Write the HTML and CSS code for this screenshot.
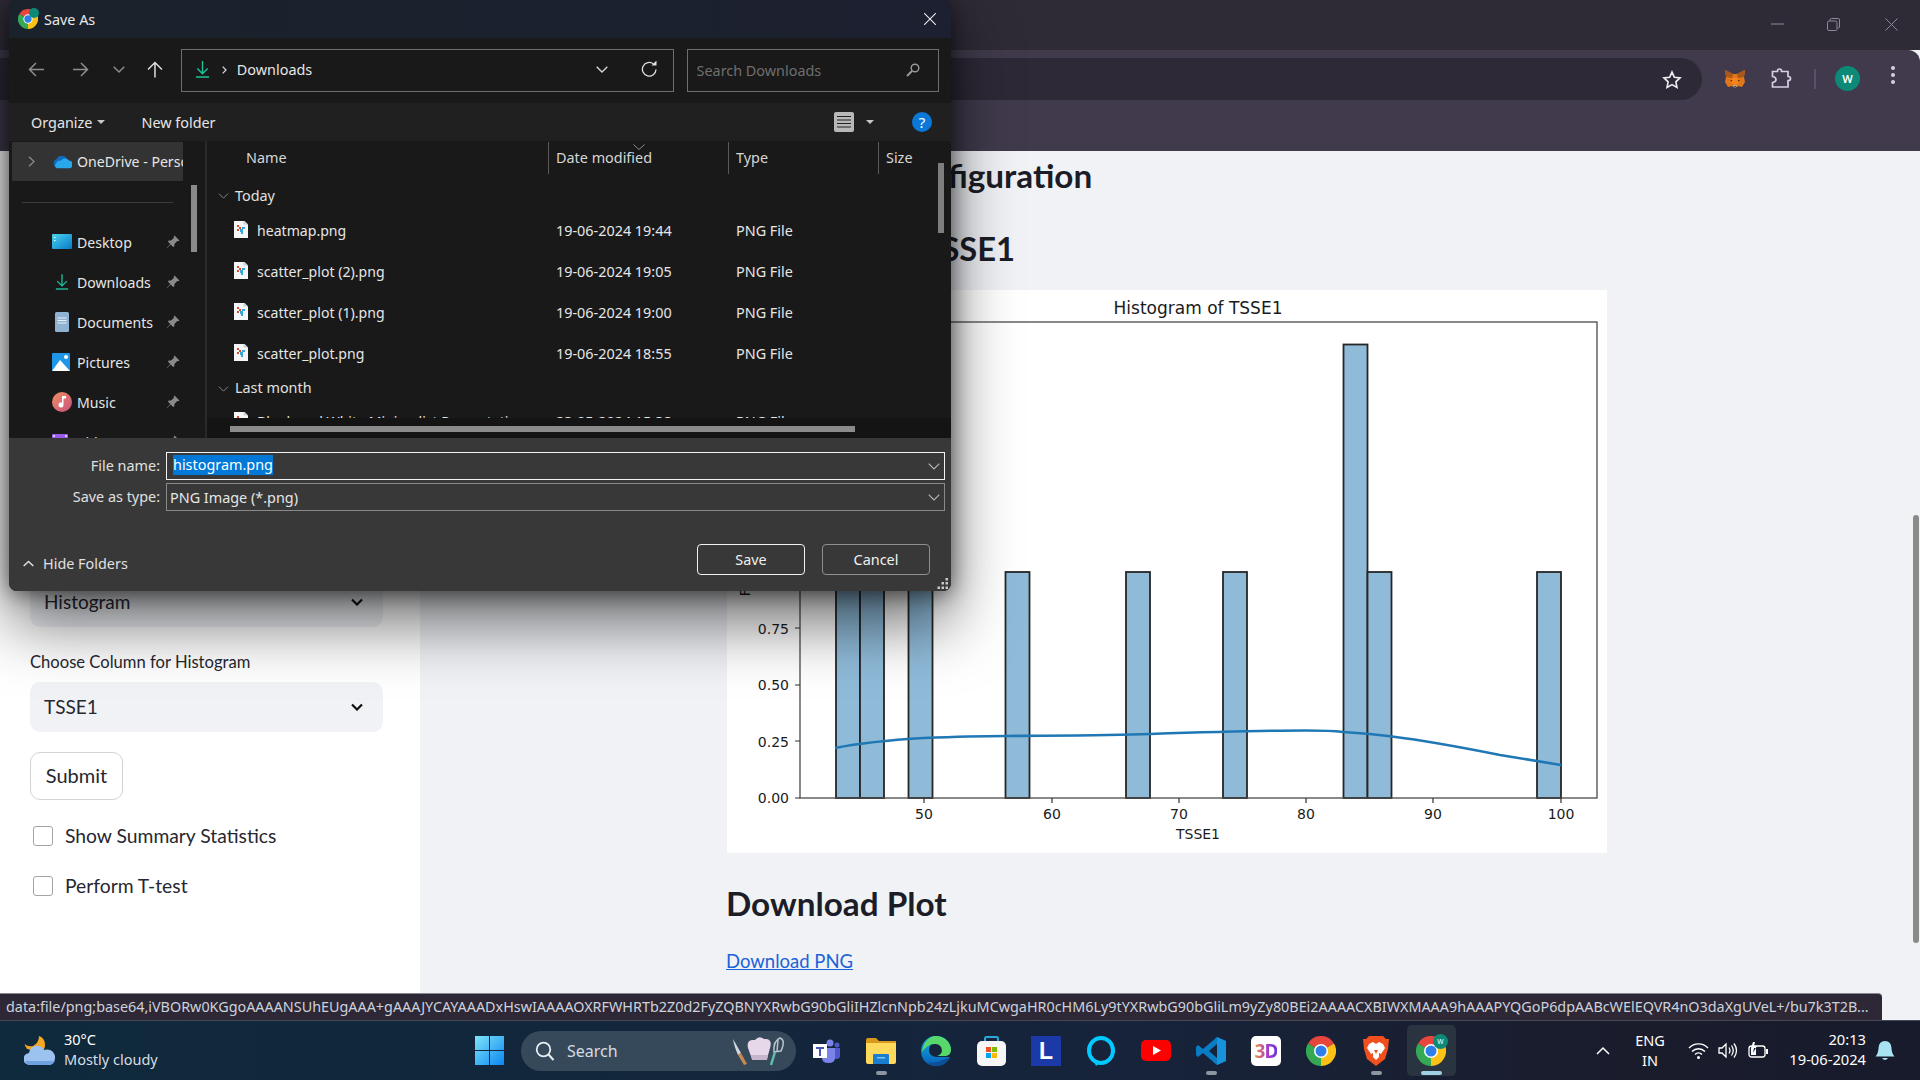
FILE: index.html
```html
<!DOCTYPE html>
<html lang="en">
<head>
<meta charset="utf-8">
<title>Save As</title>
<link rel="stylesheet" href="styles.css">
</head>
<body>
<svg class="defs" width="0" height="0" aria-hidden="true">
  <symbol id="chrome" viewBox="0 0 24 24">
    <path fill="#e8453c" d="M12 12 1.600 6A12 12 0 0 1 22.400 6Z"/>
    <path fill="#34a853" d="M12 12 1.600 6A12 12 0 0 0 12 24Z"/>
    <path fill="#fbc116" d="M12 12 22.400 6A12 12 0 0 1 12 24Z"/>
    <circle cx="12" cy="12" r="5.600" fill="#fff"/>
    <circle cx="12" cy="12" r="4.400" fill="#2f7fea"/>
  </symbol>
  <symbol id="dl" viewBox="0 0 16 18">
    <path fill="none" stroke="#1fc19b" stroke-width="1.500" d="M8 0v13M2.500 8 8 13.500 13.500 8"/>
    <path fill="none" stroke="#1fc19b" stroke-width="1.600" d="M1 17h14"/>
  </symbol>
  <symbol id="pin" viewBox="0 0 14 14">
    <path fill="#8a8a8a" d="M8.500.5 13.500 5.500 12.300 6.300 11.300 6 8.400 8.900 8.400 11.300 7.300 12 4.600 9.400 1.200 13 .9 12.800 4.300 9 2 6.700 2.700 5.600 5 5.600 8 2.700 7.700 1.700Z"/>
  </symbol>
  <symbol id="png" viewBox="0 0 14 18">
    <path fill="#f4f6f8" d="M0 0h9.500L14 4.500V18H0Z"/>
    <path fill="#c9d2da" d="M9.500 0 14 4.500H9.500Z"/>
    <path fill="#d9492c" d="M3 5h2v2H3zM5 7h2v2H5zM3 9h2v2H3z"/>
    <path fill="#34a9d8" d="M8 7h3v2H8zM6 9h3v3H6zM7 12h2v2H7z"/>
  </symbol>
  <symbol id="chev" viewBox="0 0 12 7">
    <path fill="none" stroke="currentColor" stroke-width="1.100" d="M.7.7 6 6l5.300-5.300"/>
  </symbol>
</svg>

<div class="browser">
  <div class="tabstrip">
    <svg class="winctl" width="13" height="2" viewBox="0 0 13 2"><path stroke="#8d8996" stroke-width="1" d="M0 1h13"/></svg>
    <svg class="winctl winctl-restore" width="13" height="13" viewBox="0 0 13 13"><path fill="none" stroke="#8d8996" d="M.5 4.500Q.5 3 2 3h6.500Q10 3 10 4.500v7Q10 12.500 8.500 12.500H2Q.5 12.500.5 11ZM3 2.500V2Q3 .5 4.500.5h7Q12.500 .5 12.500 2v7Q12.500 10 11 10"/></svg>
    <svg class="winctl winctl-close" width="13" height="13" viewBox="0 0 13 13"><path stroke="#8d8996" d="M.5.5l12 12M12.500.5l-12 12"/></svg>
  </div>
  <div class="toolbar">
    <div class="omnibox">
      <svg width="20" height="19" viewBox="0 0 24 23"><path fill="none" stroke="#eee" stroke-width="2" d="M12 2.500l2.900 6.300 6.800.8-5 4.700 1.300 6.800-6-3.400-6 3.400 1.300-6.800-5-4.700 6.800-.8Z"/></svg>
    </div>
    <svg class="fox" width="20" height="20" viewBox="0 0 20 20">
      <path fill="#e2761b" d="M0 1 8 5h4l8-4-1 7 1 5-3 5-4-1-1 1H8l-1-1-4 1-3-5 1-5Z"/>
      <path fill="#a8581a" d="M0 1 8 5 7 9 1 8ZM20 1 12 5l1 4 6-1Z"/>
      <path fill="#f6851b" d="M7 9h6l1 5-4 2-4-2Z"/>
      <path fill="#c0ad9e" d="M8 16h4l-1 2.500H9Z"/>
      <path fill="#161616" d="M5.500 11l2 .5-1.500 1ZM14.500 11l-2 .5 1.500 1ZM9 17h2l-1 1.500Z"/>
    </svg>
    <svg class="puzzle" width="21" height="21" viewBox="0 0 21 21"><path fill="none" stroke="#d8cfe6" stroke-width="1.700" d="M1.500 3.500H6.500V3A2 2 0 0 1 10.500 3v.5H17V8.500h.5a2 2 0 0 1 0 4H17V19H1.500V14.500Q5 14 5 11.500T1.500 8.500Z"/></svg>
    <span class="tb-sep"></span>
    <span class="avatar">W</span>
    <svg class="dots" width="4" height="18" viewBox="0 0 4 18"><g fill="#d8cfe6"><circle cx="2" cy="2" r="2"/><circle cx="2" cy="9" r="2"/><circle cx="2" cy="16" r="2"/></g></svg>
  </div>
  <div class="page">
    <aside class="sidebar">
      <div class="select"><span class="sel-val">Histogram</span><svg class="sel-chev" width="12" height="8" viewBox="0 0 12 8"><path fill="none" stroke="#111" stroke-width="2.200" d="M1 1.500 6 6.500l5-5"/></svg></div>
      <label class="field-label">Choose Column for Histogram</label>
      <div class="select"><span class="sel-val">TSSE1</span><svg class="sel-chev" width="12" height="8" viewBox="0 0 12 8"><path fill="none" stroke="#111" stroke-width="2.200" d="M1 1.500 6 6.500l5-5"/></svg></div>
      <button class="submit">Submit</button>
      <div class="check check-first"><span class="box"></span><span class="check-text">Show Summary Statistics</span></div>
      <div class="check check-second"><span class="box"></span><span class="check-text">Perform T-test</span></div>
    </aside>
    <main class="content">
      <h2 class="h-config">Histogram Configuration</h2>
      <h2 class="h-tsse">Histogram of TSSE1</h2>
      <svg class="chart" width="880" height="563" viewBox="727 290 880 563">
        <rect x="727" y="290" width="880" height="563" fill="#fff"/>
        <g class="bars">
          <rect x="836" y="572" width="24" height="226"/>
          <rect x="860" y="572" width="24" height="226"/>
          <rect x="908.500" y="572" width="24" height="226"/>
          <rect x="1005.500" y="572" width="24" height="226"/>
          <rect x="1126" y="572" width="24" height="226"/>
          <rect x="1223" y="572" width="24" height="226"/>
          <rect x="1343.500" y="344.500" width="24" height="453.500"/>
          <rect x="1367.500" y="572" width="24" height="226"/>
          <rect x="1537" y="572" width="24" height="226"/>
        </g>
        <path class="kde" d="M835 748C860 743 890 740 924 738 960 736.500 985 736 1005 736 1060 735.500 1110 735.500 1150 734 1210 732 1260 730.500 1306 730.500 1325 730.500 1335 731 1343 732 1365 733.500 1380 735 1392 736.500 1420 740 1470 749 1500 755L1561 765"/>
        <rect class="axes" x="800" y="322" width="797" height="476"/>
        <path class="ticks" d="M795 798h5M795 741h5M795 685h5M795 628h5M795 572h5M924 798v5M1052 798v5M1179 798v5M1306 798v5M1433 798v5M1561 798v5"/>
        <g class="tl tl-x">
          <text x="924" y="819">50</text><text x="1052" y="819">60</text><text x="1179" y="819">70</text>
          <text x="1306" y="819">80</text><text x="1433" y="819">90</text><text x="1561" y="819">100</text>
          <text x="1198" y="839">TSSE1</text>
          <text class="t-title" x="1198" y="314">Histogram of TSSE1</text>
        </g>
        <g class="tl tl-y">
          <text x="789" y="803">0.00</text><text x="789" y="747">0.25</text><text x="789" y="690">0.50</text><text x="789" y="634">0.75</text>
        </g>
        <text class="tl t-ylabel" transform="translate(750 560) rotate(-90)">Frequency</text>
      </svg>
      <h2 class="h-dl">Download Plot</h2>
      <a class="dl-link" href="#">Download PNG</a>
    </main>
  </div>
</div>

<div class="page-scroll"></div>
<div class="bubble">data:file/png;base64,iVBORw0KGgoAAAANSUhEUgAAA+gAAAJYCAYAAADxHswIAAAAOXRFWHRTb2Z0d2FyZQBNYXRwbG90bGliIHZlcnNpb24zLjkuMCwgaHR0cHM6Ly9tYXRwbG90bGliLm9yZy80BEi2AAAACXBIWXMAAA9hAAAPYQGoP6dpAABcWElEQVR4nO3daXgUVeL+/bu7k3T2B...</div>

<div class="taskbar">
  <div class="weather">
    <svg width="32" height="30" viewBox="0 0 32 30">
      <path fill="#f5a623" d="M15 0Q21 2 21 9 21 14 17 16L3 13Q1 10 .5 8 4 11 9 10 15 7 15 0Z"/>
      <path fill="#9cc3f0" d="M6 29a6 6 0 0 1-1-12 8 8 0 0 1 15-3 7.500 7.500 0 0 1 6 15Z"/>
      <path fill="#6fa0e0" d="M6 29h20a8 8 0 0 0 5-4H1a6 6 0 0 0 5 4Z"/>
    </svg>
    <div class="w-text"><div>30°C</div><div class="w-sub">Mostly cloudy</div></div>
  </div>
  <svg class="win-logo" width="29" height="29" viewBox="0 0 29 29">
    <defs><linearGradient id="wg" x1="0" y1="0" x2="1" y2="1"><stop offset="0" stop-color="#7fe5f9"/><stop offset="1" stop-color="#0a86f2"/></linearGradient></defs>
    <path fill="url(#wg)" d="M0 0h14v14H0zM15 0h14v14H15zM0 15h14v14H0zM15 15h14v14H15z"/>
  </svg>
  <div class="search">
    <svg width="20" height="20" viewBox="0 0 20 20"><circle cx="8.500" cy="8.500" r="6.800" fill="none" stroke="#e8edf2" stroke-width="1.800"/><path stroke="#e8edf2" stroke-width="2" d="M13.500 13.500 18.500 19"/></svg>
    <span class="s-label">Search</span>
    <svg class="s-art" width="54" height="30" viewBox="0 0 54 30">
      <path fill="#cfd8de" d="M0 3 8 17 5 19Q1 10 0 3Z"/><path fill="#c48a4e" d="M5 19 8 17 14 28 11 29Z"/>
      <path fill="#e6d8e8" d="M15 12Q13 3 22 4 26-1 31 3 40 2 37 12L34 23H19Z"/>
      <path fill="#c7b5cd" d="M18 19H35L34 24H19Z"/>
      <path fill="none" stroke="#b7c4cc" stroke-width="1.500" d="M41 16Q40 5 47 2 53 4 48 15L41 16ZM45 4 44 15"/>
      <path stroke="#5dbfa8" stroke-width="2.500" d="M42 16 38 29"/>
    </svg>
  </div>
  <div class="slots">
    <div class="slot">
      <svg width="27" height="24" viewBox="0 0 27 24">
        <circle cx="17" cy="4" r="3.500" fill="#7b83eb"/><circle cx="24" cy="6" r="2.500" fill="#5059c9"/>
        <path fill="#5059c9" d="M20 9h7v8q0 3-3.500 3T20 17Z"/><path fill="#7b83eb" d="M9 9h13v10q0 5-6.500 5T9 19Z"/>
        <rect y="5" width="14" height="14" fill="#fff"/><path fill="#4b53bc" d="M3 8h8v2H8v7H6v-7H3Z"/>
      </svg>
    </div>
    <div class="slot on">
      <svg width="30" height="26" viewBox="0 0 30 26">
        <path fill="#d99a1c" d="M0 2Q0 0 2 0h8l3 3h17v20H0Z"/><path fill="#ffd95c" d="M0 5h30v19q0 2-2 2H2q-2 0-2-2Z"/>
        <path fill="#1a7ed0" d="M8 16h14q1 0 1 1v9H7v-9q0-1 1-1Z"/><path fill="#7fc5f5" d="M11 19h8v1.500h-8Z"/>
      </svg>
      <i class="ind"></i>
    </div>
    <div class="slot">
      <svg width="30" height="30" viewBox="0 0 30 30">
        <defs><linearGradient id="eg" x1="0" y1="0" x2="0" y2="1"><stop offset="0" stop-color="#16b3d8"/><stop offset=".7" stop-color="#0c78c8"/><stop offset="1" stop-color="#0a5fb0"/></linearGradient></defs>
        <path fill="url(#eg)" d="M15 0A15 15 0 0 0 0 15c0 9 7 15 15 15 7 0 12-4 14-9H16c-5 0-8-3-8-7 0-5 4-8 9-8 6 0 8 4 8 8h5C30 6 23 0 15 0Z"/>
        <path fill="#58d86a" d="M15 0C23 0 30 6 30 14q0 5-5 6H16q4-1 5-5 0-6-6-7-8-1-14 8C2 7 8 0 15 0Z"/>
        <path fill="#0c4f96" d="M29 21q-4 9-14 9-5 0-8-4 6 2 12-1Z"/>
      </svg>
    </div>
    <div class="slot">
      <svg width="29" height="30" viewBox="0 0 29 30">
        <path fill="none" stroke="#2aa8d8" stroke-width="2" d="M8 6V2.500Q8 1 9.500 1h10Q21 1 21 2.500V6"/>
        <rect y="5" width="29" height="25" rx="5" fill="#f6f6f6"/>
        <path fill="#f25022" d="M9 11h5v5H9z"/><path fill="#7fba00" d="M15 11h5v5h-5z"/><path fill="#00a4ef" d="M9 17h5v5H9z"/><path fill="#ffb900" d="M15 17h5v5h-5z"/>
      </svg>
    </div>
    <div class="slot"><span class="l-icon">L</span></div>
    <div class="slot">
      <svg width="30" height="30" viewBox="0 0 30 30"><ellipse cx="15" cy="14.500" rx="12" ry="12.500" fill="none" stroke="#00caff" stroke-width="4"/><path fill="#00caff" d="M7 23 10 30 15 26Z"/></svg>
    </div>
    <div class="slot">
      <svg width="30" height="21" viewBox="0 0 30 21"><rect width="30" height="21" rx="5" fill="#f00"/><path fill="#fff" d="M12 6l8 4.500L12 15Z"/></svg>
    </div>
    <div class="slot on">
      <svg width="30" height="30" viewBox="0 0 30 30">
        <path fill="#0a7cc4" d="M21 1 30 5V25L21 29 7 17 2 21 0 19V11L2 9 7 13ZM21 8 13 15 21 22Z"/>
        <path fill="#1d9de6" d="M21 1 30 5V25L21 29Z" opacity=".7"/>
      </svg>
      <i class="ind"></i>
    </div>
    <div class="slot"><span class="d3-icon"><span class="d3-text">3D</span></span></div>
    <div class="slot"><svg width="30" height="30"><use href="#chrome"/></svg></div>
    <div class="slot on">
      <svg width="26" height="30" viewBox="0 0 26 30">
        <path fill="#f1501e" d="M6 0H20L23 3 26 3 25 13 22 23 13 30 4 23 1 13 0 3 3 3Z"/>
        <path fill="#fff" d="M6 8 10 6 13 8 16 6 20 8 22 12 18 18 16 17 16 21 13 24 10 21 10 17 8 18 4 12Z"/>
        <path fill="#f1501e" d="M11 14 13 18 15 14Z"/>
      </svg>
      <i class="ind"></i>
    </div>
    <div class="slot active">
      <span class="chrome-active">
        <svg width="30" height="30"><use href="#chrome"/></svg>
        <span class="badge">w</span>
      </span>
      <i class="ind ind-active"></i>
    </div>
  </div>
  <svg class="t-caret" width="14" height="9" viewBox="0 0 14 9"><path fill="none" stroke="#fff" stroke-width="1.500" d="M1 8 7 2l6 6"/></svg>
  <div class="lang"><div>ENG</div><div>IN</div></div>
  <svg class="t-wifi" width="21" height="17" viewBox="0 0 21 17"><g fill="none" stroke="#fff" stroke-width="1.400"><path d="M1 6a13 13 0 0 1 19 0M4 9.500a9 9 0 0 1 13 0M7 12.500a5 5 0 0 1 7 0"/></g><circle cx="10.500" cy="15.500" r="1.500" fill="#fff"/></svg>
  <svg class="t-vol" width="20" height="17" viewBox="0 0 20 17"><g fill="none" stroke="#fff" stroke-width="1.300"><path d="M1 6v5h3l4 4V2L4 6Z"/><path d="M11 5.500q2 3 0 6M13.500 3.500q3.500 5 0 10M16 1.500q5 7 0 14"/></g></svg>
  <svg class="t-bat" width="20" height="17" viewBox="0 0 20 17"><rect x="1" y="4" width="16" height="11" rx="2.500" fill="none" stroke="#fff" stroke-width="1.300"/><path fill="#fff" d="M18 7h2v5h-2ZM3 13V6h5v7ZM5 0 3 6h3l-1 5 4-7H6l1-4Z"/></svg>
  <div class="clock"><div>20:13</div><div>19-06-2024</div></div>
  <svg class="t-bell" width="20" height="20" viewBox="0 0 20 20"><path fill="#a8e3f2" d="M10 0q6 0 6.500 7 0 5 3 8.500H.500q3-3.500 3-8.500Q4 0 10 0ZM7 17h6q-3 4-6 0Z"/></svg>
</div>

<section class="dialog">
  <header class="dlg-title">
    <span class="dlg-appicon">
      <svg width="20" height="20"><use href="#chrome"/></svg>
      <span class="dlg-badge"></span>
    </span>
    <span class="dlg-title-text">Save As</span>
    <svg class="dlg-close" width="12" height="12" viewBox="0 0 12 12"><path stroke="#e8e8e8" stroke-width="1.100" d="M0 0l12 12M12 0 0 12"/></svg>
  </header>
  <div class="dlg-nav">
    <svg class="nv-back" width="17" height="15" viewBox="0 0 17 15"><path fill="none" stroke="#8e8e8e" stroke-width="1.500" d="M16 7.500H1.500M8 1 1.500 7.500 8 14"/></svg>
    <svg class="nv-fwd" width="17" height="15" viewBox="0 0 17 15"><path fill="none" stroke="#8e8e8e" stroke-width="1.500" d="M1 7.500h14.500M9 1l6.500 6.500L9 14"/></svg>
    <svg class="nv-down" width="12" height="7" viewBox="0 0 12 7"><path fill="none" stroke="#8e8e8e" stroke-width="1.400" d="M.7.7 6 6l5.300-5.300"/></svg>
    <svg class="nv-up" width="16" height="17" viewBox="0 0 16 17"><path fill="none" stroke="#dedede" stroke-width="1.500" d="M8 16.500V1.500M1 8.500l7-7 7 7"/></svg>
    <div class="addr">
      <svg class="addr-dl" width="15" height="19"><use href="#dl"/></svg>
      <svg class="addr-sep" width="5" height="8" viewBox="0 0 5 8"><path fill="none" stroke="#ddd" stroke-width="1.200" d="M.7.7 4 4 .7 7.300"/></svg>
      <span class="addr-text">Downloads</span>
      <svg class="addr-drop" width="12" height="7" viewBox="0 0 12 7"><path fill="none" stroke="#d8d8d8" stroke-width="1.300" d="M.7.7 6 6l5.300-5.300"/></svg>
      <svg class="addr-ref" width="17" height="17" viewBox="0 0 17 17"><path fill="none" stroke="#e0e0e0" stroke-width="1.300" d="M15 8.500A6.800 6.800 0 1 1 12.500 3"/><path fill="#e0e0e0" d="M10.500 4.500h5v-5Z"/></svg>
    </div>
    <div class="dlg-search">
      <span>Search Downloads</span>
      <svg width="14" height="14" viewBox="0 0 14 14"><circle cx="9" cy="5" r="3.800" fill="none" stroke="#9a9a9a" stroke-width="1.400"/><path stroke="#9a9a9a" stroke-width="2" d="M6 8 1 13"/></svg>
    </div>
  </div>
  <div class="dlg-cmd">
    <span class="cmd-org">Organize</span><span class="caret"></span>
    <span class="cmd-new">New folder</span>
    <svg class="cmd-view" width="20" height="20" viewBox="0 0 20 20"><rect width="20" height="20" rx="2" fill="#b8b8b8"/><path stroke="#222" d="M3 4.500h14M3 8h14M3 11.500h14M3 15h14"/></svg>
    <span class="caret caret-view"></span>
    <span class="cmd-help">?</span>
  </div>
  <div class="dlg-body">
    <nav class="dlg-navpane">
      <div class="nv-row nv-sel">
        <svg class="nv-exp" width="7" height="11" viewBox="0 0 7 11"><path fill="none" stroke="#8a8a8a" stroke-width="1.300" d="M1 .7 6 5.500 1 10.300"/></svg>
        <svg class="nv-ic" width="20" height="13" viewBox="0 0 20 13"><path fill="#0f6cbd" d="M5 12A4.500 4.500 0 0 1 4.500 3.500 6 6 0 0 1 15 3Z"/><path fill="#28a8ea" d="M5 13H16a4 4 0 0 0 1-8 5 5 0 0 0-8 0Q5 5 4 8a3 3 0 0 0 1 5Z"/></svg>
        <span class="nv-clip">OneDrive - Personal</span>
      </div>
      <div class="nv-line"></div>
      <div class="nv-row">
        <svg class="nv-ic" width="20" height="16" viewBox="0 0 20 16"><defs><linearGradient id="dg" x1="0" y1="0" x2="1" y2="1"><stop offset="0" stop-color="#49d4ee"/><stop offset="1" stop-color="#0a78c8"/></linearGradient></defs><rect width="20" height="15" rx="1" fill="url(#dg)"/><path fill="#fff" d="M2 3h1.500v1H2zM2 6h1.500v1H2z"/></svg>
        <span>Desktop</span><svg class="nv-pin" width="14" height="14"><use href="#pin"/></svg>
      </div>
      <div class="nv-row">
        <svg class="nv-ic nv-ic-dl" width="14" height="18"><use href="#dl"/></svg>
        <span>Downloads</span><svg class="nv-pin" width="14" height="14"><use href="#pin"/></svg>
      </div>
      <div class="nv-row">
        <svg class="nv-ic nv-ic-dl" width="14" height="20" viewBox="0 0 14 20"><rect width="14" height="20" rx="1.500" fill="#8fb2d2"/><path stroke="#e8f0f6" stroke-width="1" d="M2.500 6h9M2.500 8.500h9M2.500 11h9"/></svg>
        <span>Documents</span><svg class="nv-pin" width="14" height="14"><use href="#pin"/></svg>
      </div>
      <div class="nv-row">
        <svg class="nv-ic" width="18" height="18" viewBox="0 0 18 18"><rect width="18" height="18" rx="1" fill="#1f96e8"/><path fill="#fff" d="M0 18 8 7l10 11Z"/><circle cx="14" cy="4" r="2" fill="#fff"/></svg>
        <span>Pictures</span><svg class="nv-pin" width="14" height="14"><use href="#pin"/></svg>
      </div>
      <div class="nv-row">
        <svg class="nv-ic" width="20" height="20" viewBox="0 0 20 20"><defs><linearGradient id="mg" x1="0" y1="0" x2="1" y2="1"><stop offset="0" stop-color="#f09060"/><stop offset="1" stop-color="#c84f80"/></linearGradient></defs><circle cx="10" cy="10" r="10" fill="url(#mg)"/><path fill="#fff" d="M10 4h4v2.500h-2.500V13a2.500 2.500 0 1 1-1.500-2.300Z"/></svg>
        <span>Music</span><svg class="nv-pin" width="14" height="14"><use href="#pin"/></svg>
      </div>
      <div class="nv-row">
        <svg class="nv-ic" width="16" height="16" viewBox="0 0 16 16"><rect width="16" height="16" rx="1" fill="#9a5ce8"/><path fill="#d9c3ff" d="M1 1h2v2H1zM13 1h2v2h-2z"/></svg>
        <span>Videos</span><svg class="nv-pin" width="14" height="14"><use href="#pin"/></svg>
      </div>
      <div class="nv-scroll"></div>
    </nav>
    <div class="dlg-split"></div>
    <div class="dlg-files">
      <div class="col-head fgrid">
        <div class="c1">Name</div>
        <div class="cell">Date modified<svg class="sort" width="12" height="6" viewBox="0 0 12 6"><path fill="none" stroke="#8a8a8a" d="M.5.500 6 5.500 11.500.500"/></svg></div>
        <div class="cell">Type</div>
        <div class="cell">Size</div>
      </div>
      <div class="file-list">
        <div class="grp"><svg class="grp-chev" width="11" height="6"><use href="#chev"/></svg>Today</div>
        <div class="frow fgrid"><div class="fname"><svg width="14" height="18"><use href="#png"/></svg>heatmap.png</div><div class="fcell">19-06-2024 19:44</div><div class="fcell">PNG File</div></div>
        <div class="frow fgrid"><div class="fname"><svg width="14" height="18"><use href="#png"/></svg>scatter_plot (2).png</div><div class="fcell">19-06-2024 19:05</div><div class="fcell">PNG File</div></div>
        <div class="frow fgrid"><div class="fname"><svg width="14" height="18"><use href="#png"/></svg>scatter_plot (1).png</div><div class="fcell">19-06-2024 19:00</div><div class="fcell">PNG File</div></div>
        <div class="frow fgrid"><div class="fname"><svg width="14" height="18"><use href="#png"/></svg>scatter_plot.png</div><div class="fcell">19-06-2024 18:55</div><div class="fcell">PNG File</div></div>
        <div class="grp grp-month"><svg class="grp-chev" width="11" height="6"><use href="#chev"/></svg>Last month</div>
        <div class="frow fgrid"><div class="fname"><svg width="14" height="18"><use href="#png"/></svg>Blank and White Minimalist Presentation</div><div class="fcell">23-05-2024 15:38</div><div class="fcell">PNG File</div></div>
      </div>
      <div class="hscroll"><div class="hthumb"></div></div>
      <div class="vthumb"></div>
    </div>
  </div>
  <div class="dlg-bottom">
    <div class="fld fld-name">
      <label>File name:</label>
      <div class="inp inp-focus"><span class="sel-text">histogram.png</span><svg class="inp-chev" width="12" height="7"><use href="#chev"/></svg></div>
    </div>
    <div class="fld fld-type">
      <label>Save as type:</label>
      <div class="inp"><span class="type-text">PNG Image (*.png)</span><svg class="inp-chev" width="12" height="7"><use href="#chev"/></svg></div>
    </div>
    <div class="dlg-actions">
      <svg class="hf-chev" width="11" height="7" viewBox="0 0 11 7"><path fill="none" stroke="#e0e0e0" stroke-width="1.500" d="M.7 6 5.500 1.500 10.300 6"/></svg>
      <span class="hf">Hide Folders</span>
      <button class="dbtn dbtn-save">Save</button>
      <button class="dbtn dbtn-cancel">Cancel</button>
    </div>
    <svg class="grip" width="11" height="11" viewBox="0 0 11 11"><path fill="#c8c8c8" d="M8.500 0H11V2.500H8.500ZM4.500 4H7V6.500H4.500ZM8.500 4H11V6.500H8.500ZM.5 8.500H3V11H.5ZM4.500 8.500H7V11H4.500ZM8.500 8.500H11V11H8.500Z"/></svg>
  </div>
</section>
</body>
</html>
```

FILE: styles.css
```css
* { box-sizing: border-box; }
html, body { margin: 0; padding: 0; }
body {
  width: 1920px; height: 1080px; overflow: hidden; position: relative;
  background: #f0f2f6; font-family: "Noto Sans", sans-serif; color: #31333f;
}
.defs { position: absolute; }

/* browser */
.browser { height: 1020px; display: flex; flex-direction: column; overflow: hidden; }
.tabstrip { height: 50px; background: #2e2a36; display: flex; align-items: center; flex: none; padding-left: 1771px; position: relative; }
.winctl { display: block; flex: none; margin-top: -2px; }
.winctl-restore { margin-left: 43px; }
.winctl-close { margin-left: 45px; }
.toolbar { height: 101px; flex: none; background: #403a4c; border-top-right-radius: 12px; display: flex; align-items: flex-start; }
.omnibox { width: 1702px; height: 42px; margin-top: 8px; background: #2d2937; border-radius: 0 21px 21px 0; display: flex; align-items: center; justify-content: flex-end; padding-right: 20px; }
.fox { margin: 19px 0 0 23px; flex: none; }
.puzzle { margin: 18px 0 0 26px; flex: none; }
.tb-sep { width: 2px; height: 20px; background: #57506a; margin: 19px 0 0 22px; flex: none; }
.avatar { width: 25px; height: 25px; border-radius: 50%; background: #0d8a77; color: #fff; font-size: 11px; font-weight: 600; margin: 16px 0 0 19px; display: flex; align-items: center; justify-content: center; flex: none; }
.dots { flex: none; margin: 16px 0 0 31px; }

.page { flex: 1; display: flex; min-height: 0; }
.sidebar { width: 420px; flex: none; background: #fff; padding: 426px 37px 0 30px; font-family: "Lato", "Noto Sans", sans-serif; color: #111; }
.select { height: 50px; background: #f0f2f6; border-radius: 10px; display: flex; align-items: center; justify-content: space-between; padding: 0 20px 0 14px; font-size: 19px; color: #262730; }
.sel-val { margin-bottom: 2px; }
.field-label { display: block; height: 24px; margin: 23px 0 8px; font-size: 16.600px; line-height: 24px; color: #262730; }
.submit { display: block; width: 93px; height: 48px; margin-top: 20px; background: #fff; border: 1px solid #d2d3d6; border-radius: 10px; font: 20px/42px "Lato", sans-serif; color: #262730; padding: 0 0 3px; }
.check { display: flex; align-items: center; height: 20px; font-size: 19.300px; color: #262730; gap: 12px; padding-left: 3px; }
.check-text { margin-bottom: 2px; }
.check-first { margin-top: 26px; }
.check-second { margin-top: 30px; }
.box { width: 20px; height: 20px; background: #fff; border: 1px solid #a3a3a8; border-radius: 3px; flex: none; }

.content { flex: 1; padding: 2px 0 0 306px; font-family: "Lato", "Noto Sans", sans-serif; }
.content h2 { margin: 0; font-size: 33.300px; line-height: 44px; font-weight: 700; color: #1c1d26; }
.content .h-tsse { margin-top: 30px; font-size: 32.700px; }
.chart { display: block; margin: 19px 0 0 1px; }
.bars rect { fill: #8fbbd9; stroke: #262626; stroke-width: 1.800; }
.kde { fill: none; stroke: #1f77b4; stroke-width: 2.600; }
.axes { fill: none; stroke: #4a4a4a; stroke-width: 1.300; }
.ticks { stroke: #333; stroke-width: 1.200; fill: none; }
.tl { font-family: "DejaVu Sans", sans-serif; font-size: 14px; fill: #1b1b1b; }
.tl-x { text-anchor: middle; }
.tl-y { text-anchor: end; }
.t-title { font-size: 17px; }
.t-ylabel { text-anchor: middle; }
.content .h-dl { margin-top: 28px; }
.dl-link { display: block; margin-top: 22px; height: 28px; line-height: 28px; font-size: 18.500px; color: #1c62d8; text-decoration: underline; }
.page-scroll { position: absolute; left: 1913px; top: 515px; width: 6px; height: 428px; background: #8a8a8a; border-radius: 3px; }

/* status bubble */
.bubble { position: absolute; left: 0; top: 993px; width: 1882px; height: 27px; background: #2e2836; border-top: 1px solid #8a8790; border-top-right-radius: 4px; color: #cdd2dc; font-size: 14.370px; line-height: 26px; padding-left: 6px; white-space: nowrap; overflow: hidden; font-family: "Noto Sans", sans-serif; }

/* taskbar */
.taskbar { height: 60px; background: linear-gradient(90deg, #0f2a3c 0%, #14253b 45%, #17233a 60%, #1a1c2c 85%, #171b2b 100%); border-top: 1px solid #474a55; display: flex; align-items: center; color: #fff; font-size: 14.500px; position: relative; }
.weather { width: 475px; flex: none; padding-left: 24px; display: flex; align-items: center; gap: 8px; line-height: 20px; }
.w-text { margin-bottom: 3px; }
.w-sub { color: #d8dde2; }
.win-logo { flex: none; }
.search { width: 275px; height: 40px; margin-left: 17px; border-radius: 20px; background: #36495a; display: flex; align-items: center; padding-left: 14px; color: #d6dce2; flex: none; }
.s-label { margin-left: 12px; font-size: 16px; }
.s-art { margin-left: auto; margin-right: 9px; }
.slots { display: flex; margin-left: 2.500px; flex: none; }
.slot { width: 55px; height: 59px; display: flex; align-items: center; justify-content: center; position: relative; flex: none; }
.ind { position: absolute; left: 22px; bottom: 5px; width: 11px; height: 4px; border-radius: 2px; background: #8c96a0; }
.active::before { content: ""; position: absolute; left: 3px; right: 3px; top: 4px; bottom: 4px; background: #2a3340; border-radius: 5px; }
.active svg { position: relative; }
.ind-active { left: 17px; width: 21px; background: #9fd0e6; }
.chrome-active { position: relative; display: block; width: 30px; height: 30px; }
.badge { position: absolute; right: -2px; top: -2px; width: 15px; height: 15px; border-radius: 50%; background: #0d8a77; color: #dff; font-size: 8px; line-height: 14px; text-align: center; }
.l-icon { width: 30px; height: 30px; background: #1c39a8; color: #fff; font: 700 23px/30px "Liberation Sans", sans-serif; text-align: center; }
.d3-icon { width: 30px; height: 30px; background: #fff; border-radius: 5px; text-align: center; font: 700 19px/30px "Noto Sans", sans-serif; letter-spacing: -1px; }
.d3-text { background: linear-gradient(90deg, #f08a3c, #a23ad0 60%, #6a3ad8); -webkit-background-clip: text; background-clip: text; color: transparent; }
.t-caret { margin-left: 137.500px; flex: none; }
.lang { width: 40px; margin: 0 0 2px 20px; text-align: center; line-height: 20px; flex: none; }
.t-wifi { margin-left: 18px; flex: none; }
.t-vol { margin-left: 9px; flex: none; }
.t-bat { margin-left: 10px; flex: none; }
.clock { width: 80px; margin: 0 0 3px 18px; text-align: right; line-height: 20px; flex: none; white-space: nowrap; font-size: 14.700px; }
.t-bell { margin-left: 9px; flex: none; }

/* dialog */
.dialog { position: absolute; left: 9px; top: 0; width: 942px; height: 591px; display: flex; flex-direction: column; background: #191919; border-radius: 8px; color: #e6e6e6; font-size: 14.400px; box-shadow: 0 32px 64px rgba(0,0,0,.56), 0 2px 21px rgba(0,0,0,.55); overflow: visible; }
.dlg-title { height: 38px; flex: none; background: linear-gradient(90deg, #1a222b, #1c2030); border-radius: 8px 8px 0 0; display: flex; align-items: center; padding: 0 15px 0 9px; }
.dlg-appicon { position: relative; width: 20px; height: 20px; display: block; flex: none; }
.dlg-appicon svg { display: block; }
.dlg-badge { position: absolute; right: -1px; top: -1px; width: 10px; height: 10px; border-radius: 50%; background: #0d8a77; }
.dlg-title-text { margin-left: 6px; color: #e8e8e8; }
.dlg-close { margin-left: auto; }
.dlg-nav { height: 65px; flex: none; display: flex; align-items: center; padding: 0 12px 0 19px; }
.nv-fwd { margin-left: 27px; }
.nv-down { margin-left: 24px; }
.nv-up { margin-left: 22px; }
.nv-back, .nv-fwd, .nv-down, .nv-up { margin-bottom: 2px; }
.addr { width: 494px; height: 43px; margin-left: 18px; border: 1px solid #6e6e6e; display: flex; align-items: center; padding-left: 13px; }
.addr-dl, .addr-sep, .addr-drop, .addr-ref { margin-bottom: 2px; }
.addr-text { margin-bottom: 2px; }
.addr-sep { margin: 0 10px 2px 12px; }
.addr-drop { margin-left: auto; }
.addr-ref { margin: 0 15px 2px 33px; }
.dlg-search { width: 253px; height: 43px; margin-left: 13px; border: 1px solid #6e6e6e; display: flex; align-items: center; justify-content: space-between; padding: 0 18px 1px 9px; color: #6f6f6f; }
.dlg-cmd { height: 38px; flex: none; background: #202020; display: flex; align-items: center; padding-left: 22px; }
.cmd-org { color: #e6e6e6; }
.caret { width: 0; height: 0; border: 4px solid transparent; border-top: 4px solid #c8c8c8; border-bottom: 0; margin-left: 5px; }
.cmd-new { margin-left: 36px; }
.cmd-view { margin-left: auto; }
.caret-view { margin-left: 12px; }
.cmd-help { width: 20px; height: 20px; border-radius: 50%; background: #0a78d8; color: #fff; font-size: 15px; line-height: 20px; text-align: center; margin: 0 19px 0 38px; }
.dlg-body { height: 297px; flex: none; display: flex; overflow: hidden; }
.dlg-navpane { width: 196px; flex: none; position: relative; padding: 1px 0 0 3px; overflow: hidden; font-size: 14.100px; }
.nv-row { height: 40px; width: 175px; display: flex; align-items: center; position: relative; padding-left: 65px; }
.nv-ic { position: absolute; left: 40px; top: 50%; transform: translateY(-50%); }
.nv-ic-dl { left: 43px; }
.nv-pin { position: absolute; left: 154px; top: 13px; }
.nv-sel { height: 39px; width: 171px; background: #333; overflow: hidden; }
.nv-exp { position: absolute; left: 16px; top: 14px; }
.nv-clip { white-space: nowrap; }
.nv-line { height: 1px; width: 151px; margin: 21px 0 19px 10px; background: #3a3a3a; }
.nv-scroll { position: absolute; left: 182px; top: 44px; width: 6px; height: 67px; background: #8a8a8a; }
.dlg-split { width: 2px; flex: none; background: #2a2a2a; }
.dlg-files { flex: 1; display: flex; flex-direction: column; position: relative; min-width: 0; }
.fgrid { display: grid; grid-template-columns: 341px 180px 150px 1fr; }
.col-head { height: 32px; flex: none; margin-top: 1px; color: #d6d6d6; line-height: 32px; }
.c1 { padding-left: 39px; }
.cell { border-left: 1px solid #5a5a5a; padding-left: 7px; position: relative; }
.sort { position: absolute; left: 84px; top: 2px; }
.file-list { height: 244px; flex: none; overflow: hidden; padding-top: 5px; }
.grp { height: 31px; line-height: 33px; padding-left: 28px; position: relative; color: #e0e0e0; }
.grp-chev { position: absolute; left: 11px; top: 14px; color: #8a8a8a; }
.grp-month { height: 27px; line-height: 28px; }
.grp-month .grp-chev { top: 12px; }
.frow { height: 41px; align-items: center; color: #e6e6e6; }
.fname { display: flex; align-items: center; gap: 9px; padding-left: 27px; white-space: nowrap; overflow: hidden; font-size: 14.100px; }
.fname svg { flex: none; margin-top: -3px; }
.fcell { padding-left: 8px; }
.hscroll { height: 20px; flex: none; background: #141414; padding: 8px 0 0 23px; }
.hthumb { width: 625px; height: 6px; background: #8b8b8b; }
.vthumb { position: absolute; left: 731px; top: 22px; width: 6px; height: 70px; background: #7e7e7e; }
.dlg-bottom { flex: 1; background: #383838; position: relative; padding: 14px 6px 0 0; border-radius: 0 0 8px 8px; }
.fld { display: flex; height: 28px; }
.fld-type { margin-top: 3px; }
.fld label { width: 151px; text-align: right; line-height: 28px; color: #e0e0e0; flex: none; }
.inp { flex: 1; margin-left: 6px; border: 1px solid #8a8a8a; display: flex; align-items: center; padding-left: 3px; position: relative; }
.inp-focus { border-color: #f2f2f2; padding-left: 6px; }
.sel-text { background: #0078d7; color: #fff; line-height: 20px; height: 20px; display: block; margin-bottom: 2px; }
.type-text { color: #e6e6e6; }
.inp-chev { margin-left: auto; margin-right: 4px; color: #b8b8b8; }
.dlg-actions { display: flex; align-items: center; margin-top: 33px; height: 31px; padding-left: 14px; }
.hf-chev { margin-top: 7px; }
.hf { margin: 7px 0 0 9px; color: #e0e0e0; }
.dbtn { width: 108px; height: 31px; background: #383838; border: 1px solid #8f8f8f; border-radius: 4px; color: #f0f0f0; font: 14.400px "Noto Sans", sans-serif; padding: 0; }
.dbtn-save { margin-left: auto; border-color: #f2f2f2; }
.dbtn-cancel { margin: 0 15px 0 17px; }
.grip { position: absolute; right: 3px; bottom: 2px; }
```
